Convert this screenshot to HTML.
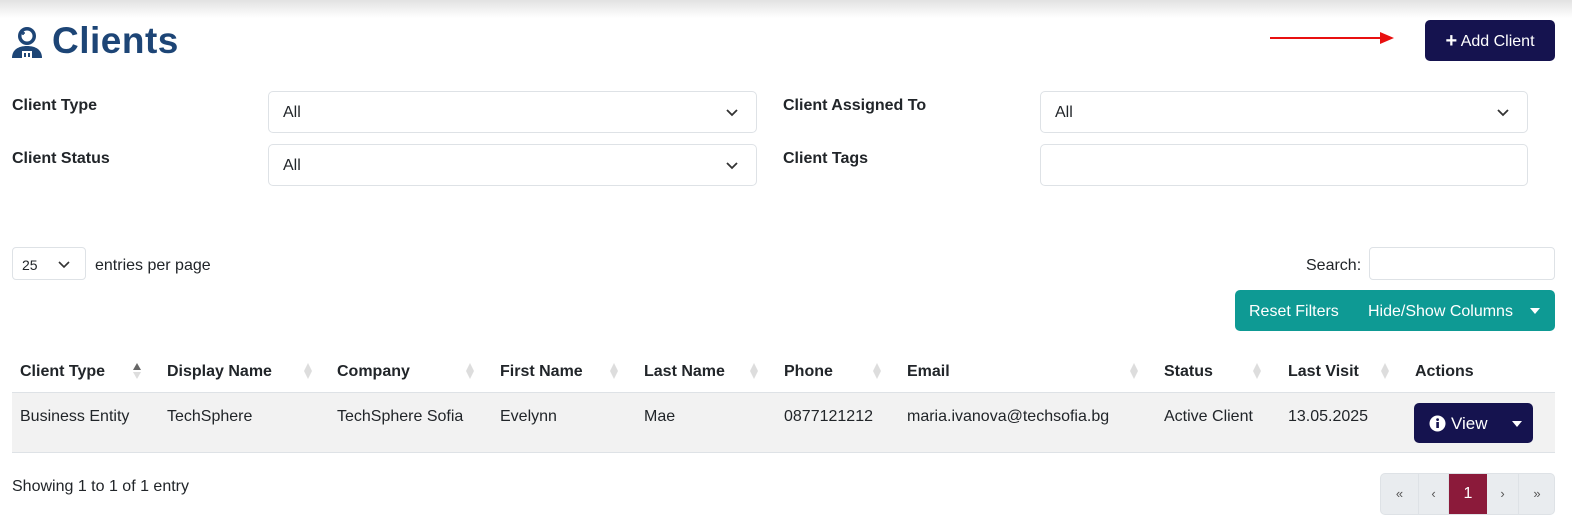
<!DOCTYPE html>
<html><head><meta charset="utf-8"><style>
*{box-sizing:border-box;margin:0;padding:0}
html,body{width:1572px;height:524px;overflow:hidden}
body{background:#fff;font-family:"Liberation Sans",sans-serif;color:#212529;position:relative;font-size:16px}
.a{position:absolute}
.top{left:0;top:0;width:1572px;height:18px;background:linear-gradient(#e2e2e2,#fff)}
.lbl{font-weight:bold;font-size:16px;color:#212529}
.sel{border:1px solid #dee2e6;border-radius:5px;height:42px;background:#fff;padding:12px 14px;font-size:16px;color:#212529}
.chev{position:absolute;right:17px;top:13px}
.h{font-weight:bold;font-size:16px;top:363px}
.d{font-size:16px;top:408px}
.sort{width:8px;height:18px;top:362px}
</style></head><body>
<div class="a top"></div>
<svg class="a" style="left:10px;top:25px" width="34" height="34" viewBox="0 0 34 34"><circle cx="17" cy="11" r="9" fill="#1d4576"/><circle cx="17" cy="11" r="5.5" fill="#fff"/><path d="M11 8h4M13 6v4" stroke="#1d4576" stroke-width="1.6"/><path d="M2 33c0-8 6-12 15-12s15 4 15 12z" fill="#1d4576"/><rect x="12" y="26" width="10" height="8" fill="#fff"/><rect x="14" y="28" width="2" height="4" fill="#1d4576"/><rect x="18" y="28" width="2" height="4" fill="#1d4576"/></svg>
<div class="a" style="left:52px;top:20px;font-size:37px;font-weight:bold;color:#1d4576;letter-spacing:0.5px">Clients</div>
<svg class="a" style="left:1268px;top:30px" width="130" height="16"><line x1="2" y1="8" x2="118" y2="8" stroke="#e81010" stroke-width="2"/><path d="M112 2l14 6-14 6z" fill="#e81010"/></svg>
<div class="a" style="left:1425px;top:20px;width:130px;height:41px;background:#15134f;border-radius:5px;color:#fff;font-size:16px;line-height:42px;text-align:center"><b style="font-size:20px;vertical-align:-1px">+</b> Add Client</div>

<div class="a lbl" style="left:12px;top:97px">Client Type</div>
<div class="a sel" style="left:268px;top:91px;width:489px">All<svg class="chev" width="14" height="14"><path d="M2 5l5 5 5-5" fill="none" stroke="#333" stroke-width="1.8"/></svg></div>
<div class="a lbl" style="left:12px;top:150px">Client Status</div>
<div class="a sel" style="left:268px;top:144px;width:489px">All<svg class="chev" width="14" height="14"><path d="M2 5l5 5 5-5" fill="none" stroke="#333" stroke-width="1.8"/></svg></div>
<div class="a lbl" style="left:783px;top:97px">Client Assigned To</div>
<div class="a sel" style="left:1040px;top:91px;width:488px">All<svg class="chev" width="14" height="14"><path d="M2 5l5 5 5-5" fill="none" stroke="#333" stroke-width="1.8"/></svg></div>
<div class="a lbl" style="left:783px;top:150px">Client Tags</div>
<div class="a sel" style="left:1040px;top:144px;width:488px"></div>

<div class="a" style="left:12px;top:247px;width:74px;height:33px;border:1px solid #dee2e6;border-radius:4px;font-size:14px;padding:9px 9px">25<svg style="position:absolute;left:45px;top:12px" width="12" height="10"><path d="M1 2l5 5 5-5" fill="none" stroke="#333" stroke-width="1.6"/></svg></div>
<div class="a" style="left:95px;top:257px;font-size:16px">entries per page</div>
<div class="a" style="left:1306px;top:257px;font-size:16px">Search:</div>
<div class="a" style="left:1369px;top:247px;width:186px;height:33px;border:1px solid #dee2e6;border-radius:4px"></div>
<div class="a" style="left:1235px;top:290px;width:320px;height:41px;background:#0e9a94;border-radius:5px;color:#fff;font-size:16px;line-height:43px"><span style="position:absolute;left:14px">Reset Filters</span><span style="position:absolute;left:133px">Hide/Show Columns</span><svg style="position:absolute;left:295px;top:18px" width="10" height="6"><path d="M0 0h10L5 6z" fill="#fff"/></svg></div>

<div class="a" style="left:12px;top:392px;width:1543px;height:61px;background:#f2f2f2;border-top:1px solid #dee2e6;border-bottom:1px solid #dee2e6"></div>
<div class="a h" style="left:20px">Client Type</div>
<div class="a h" style="left:167px">Display Name</div>
<div class="a h" style="left:337px">Company</div>
<div class="a h" style="left:500px">First Name</div>
<div class="a h" style="left:644px">Last Name</div>
<div class="a h" style="left:784px">Phone</div>
<div class="a h" style="left:907px">Email</div>
<div class="a h" style="left:1164px">Status</div>
<div class="a h" style="left:1288px">Last Visit</div>
<div class="a h" style="left:1415px">Actions</div>
<svg class="a sort" style="left:133px"><path d="M4 1l4 7H0z" fill="#666"/><path d="M4 17l4-7H0z" fill="#ddd"/></svg>
<svg class="a sort" style="left:304px"><path d="M4 1l4 8-4 8-4-8z" fill="#ddd"/></svg>
<svg class="a sort" style="left:466px"><path d="M4 1l4 8-4 8-4-8z" fill="#ddd"/></svg>
<svg class="a sort" style="left:610px"><path d="M4 1l4 8-4 8-4-8z" fill="#ddd"/></svg>
<svg class="a sort" style="left:750px"><path d="M4 1l4 8-4 8-4-8z" fill="#ddd"/></svg>
<svg class="a sort" style="left:873px"><path d="M4 1l4 8-4 8-4-8z" fill="#ddd"/></svg>
<svg class="a sort" style="left:1130px"><path d="M4 1l4 8-4 8-4-8z" fill="#ddd"/></svg>
<svg class="a sort" style="left:1253px"><path d="M4 1l4 8-4 8-4-8z" fill="#ddd"/></svg>
<svg class="a sort" style="left:1381px"><path d="M4 1l4 8-4 8-4-8z" fill="#ddd"/></svg>

<div class="a d" style="left:20px">Business Entity</div>
<div class="a d" style="left:167px">TechSphere</div>
<div class="a d" style="left:337px">TechSphere Sofia</div>
<div class="a d" style="left:500px">Evelynn</div>
<div class="a d" style="left:644px">Mae</div>
<div class="a d" style="left:784px">0877121212</div>
<div class="a d" style="left:907px">maria.ivanova@techsofia.bg</div>
<div class="a d" style="left:1164px">Active Client</div>
<div class="a d" style="left:1288px">13.05.2025</div>
<div class="a" style="left:1414px;top:403px;width:119px;height:40px;background:#15134f;border-radius:5px;color:#fff;font-size:17px;line-height:41px"><svg style="position:absolute;left:15px;top:12px" width="17" height="17"><circle cx="8.5" cy="8.5" r="8" fill="#fff"/><rect x="7.3" y="7" width="2.6" height="6" fill="#15134f"/><circle cx="8.6" cy="4.6" r="1.4" fill="#15134f"/></svg><span style="position:absolute;left:37px">View</span><svg style="position:absolute;left:98px;top:18px" width="10" height="6"><path d="M0 0h10L5 6z" fill="#fff"/></svg></div>

<div class="a" style="left:12px;top:478px;font-size:16px">Showing 1 to 1 of 1 entry</div>
<div class="a" style="left:1380px;top:473px;width:175px;height:42px;background:#e9ecef;border:1px solid #dee2e6;border-radius:5px;overflow:hidden;font-size:13px;color:#555;line-height:40px">
<span style="position:absolute;left:0;width:38px;text-align:center;border-right:1px solid #dee2e6;height:40px">«</span>
<span style="position:absolute;left:38px;width:30px;text-align:center;border-right:1px solid #dee2e6;height:40px">‹</span>
<span style="position:absolute;left:68px;width:38px;text-align:center;background:#8b1a3a;color:#fff;font-size:16px;height:40px">1</span>
<span style="position:absolute;left:106px;width:32px;text-align:center;border-right:1px solid #dee2e6;height:40px">›</span>
<span style="position:absolute;left:138px;width:36px;text-align:center">»</span>
</div>
</body></html>
